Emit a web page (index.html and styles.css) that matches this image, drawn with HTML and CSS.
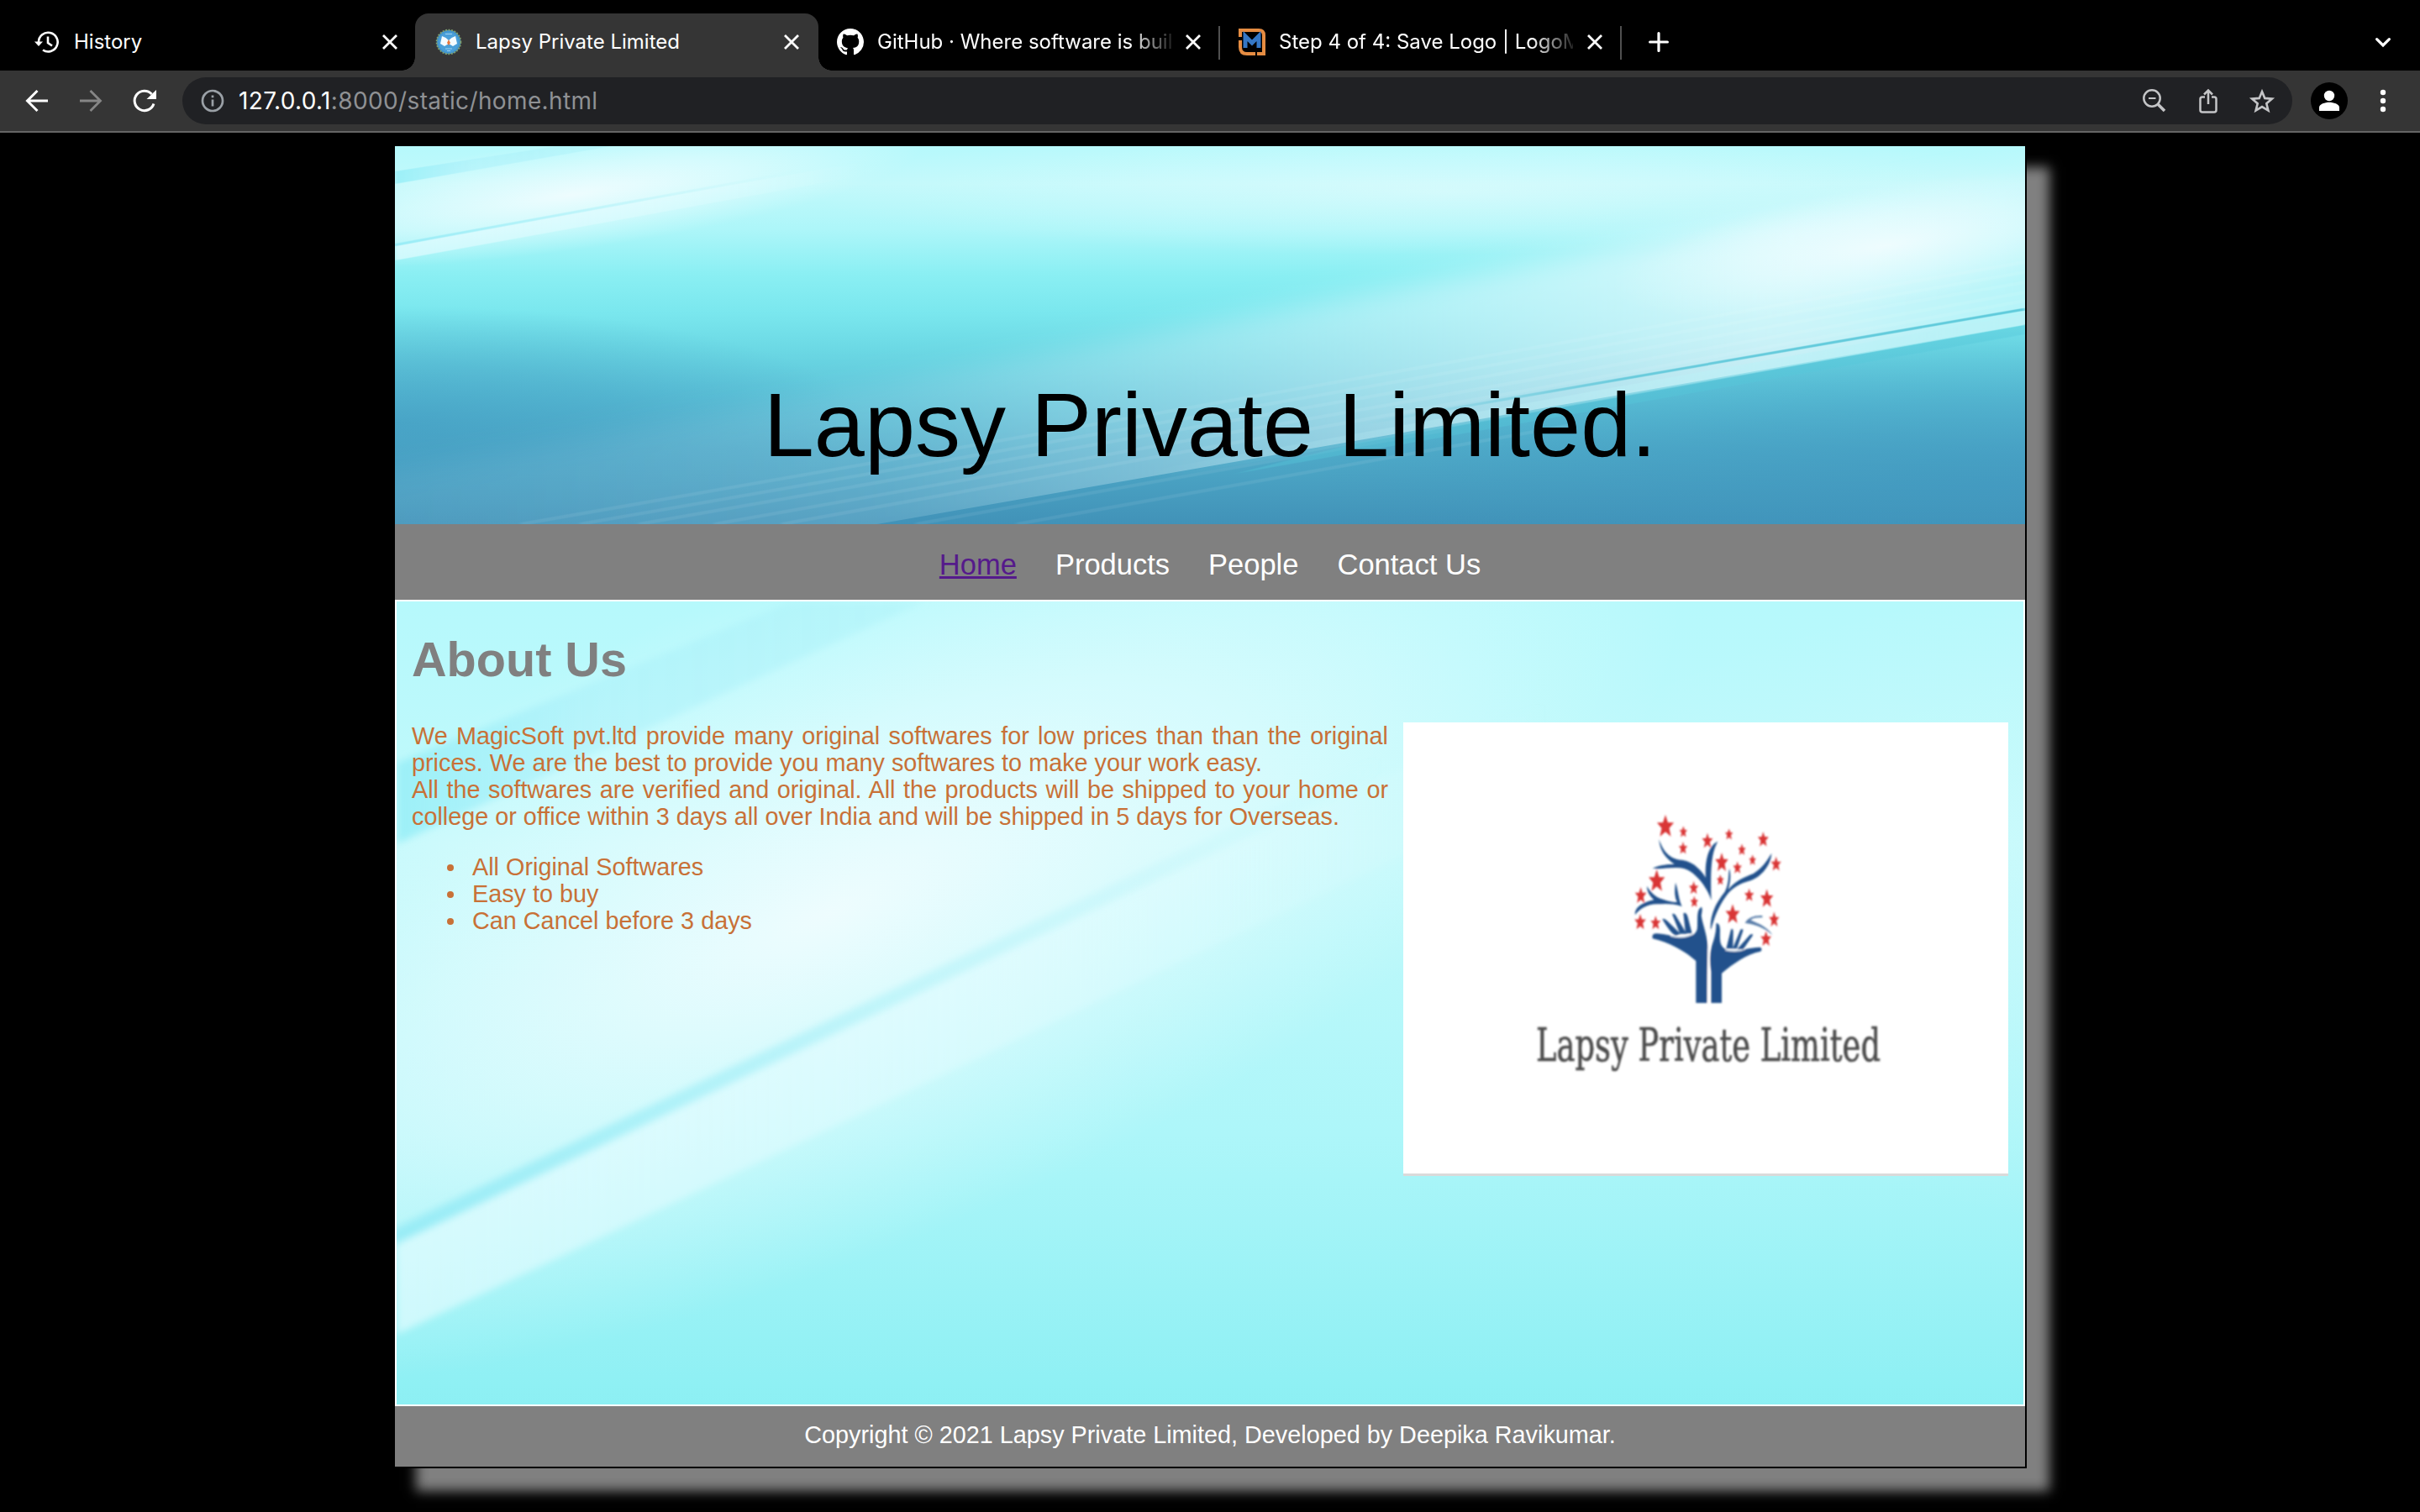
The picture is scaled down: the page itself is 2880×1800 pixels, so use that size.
FILE: index.html
```html
<!DOCTYPE html>
<html lang="en">
<head>
<meta charset="utf-8">
<title>Lapsy Private Limited</title>
<link rel="stylesheet" href="styles.css">
</head>
<body>
<svg class="defs" aria-hidden="true">
  <defs>
    <linearGradient id="base" x1="0" y1="0" x2="0" y2="1">
      <stop offset="0" stop-color="#b6f9fc"/><stop offset=".1" stop-color="#c2f9fb"/><stop offset=".22" stop-color="#adf6f9"/>
      <stop offset=".34" stop-color="#8aeff3"/><stop offset=".44" stop-color="#7ae7ee"/><stop offset=".54" stop-color="#6bd8e4"/>
      <stop offset=".66" stop-color="#5cc3d8"/><stop offset=".8" stop-color="#4fabc9"/><stop offset="1" stop-color="#4192b8"/>
    </linearGradient>
    <linearGradient id="beam" gradientUnits="userSpaceOnUse" x1="0" y1="0" x2="1940" y2="0">
      <stop offset="0" stop-color="#e0f8ff" stop-opacity=".08"/><stop offset=".3" stop-color="#e0f8ff" stop-opacity=".15"/>
      <stop offset=".6" stop-color="#ecfbff" stop-opacity=".46"/><stop offset=".85" stop-color="#f0fcff" stop-opacity=".72"/><stop offset="1" stop-color="#c8f8fc" stop-opacity=".75"/>
    </linearGradient>
    <linearGradient id="edge" gradientUnits="userSpaceOnUse" x1="0" y1="0" x2="560" y2="0">
      <stop offset="0" stop-color="#e2fcff" stop-opacity=".7"/><stop offset=".5" stop-color="#e2fcff" stop-opacity=".5"/><stop offset="1" stop-color="#e2fcff" stop-opacity="0"/>
    </linearGradient>
    <linearGradient id="lineA" gradientUnits="userSpaceOnUse" x1="0" y1="0" x2="480" y2="0">
      <stop offset="0" stop-color="#98ecf6"/><stop offset="1" stop-color="#b4f3f9" stop-opacity="0"/>
    </linearGradient>
    <linearGradient id="lineB" gradientUnits="userSpaceOnUse" x1="1150" y1="0" x2="1940" y2="0">
      <stop offset="0" stop-color="#69c7da" stop-opacity="0"/><stop offset=".4" stop-color="#69cbdc"/><stop offset="1" stop-color="#5fcbdb"/>
    </linearGradient>
    <linearGradient id="lineBand" gradientUnits="userSpaceOnUse" x1="900" y1="0" x2="1940" y2="0">
      <stop offset="0" stop-color="#bdeef5" stop-opacity="0"/><stop offset="1" stop-color="#baf2f7" stop-opacity=".9"/>
    </linearGradient>
    <linearGradient id="strip" gradientUnits="userSpaceOnUse" x1="0" y1="0" x2="260" y2="0">
      <stop offset="0" stop-color="#98eff7" stop-opacity=".9"/><stop offset=".35" stop-color="#a8effa" stop-opacity=".5"/><stop offset="1" stop-color="#b0f3f9" stop-opacity=".55"/>
    </linearGradient>
    <radialGradient id="glow"><stop offset="0" stop-color="#f6fdff" stop-opacity=".95"/><stop offset=".5" stop-color="#eefdff" stop-opacity=".55"/><stop offset="1" stop-color="#e8fdff" stop-opacity="0"/></radialGradient>
    <radialGradient id="shade"><stop offset="0" stop-color="#4098c0" stop-opacity=".6"/><stop offset=".5" stop-color="#4098c0" stop-opacity=".35"/><stop offset="1" stop-color="#4098c0" stop-opacity="0"/></radialGradient>
    <filter id="soft" x="-20%" y="-50%" width="140%" height="200%"><feGaussianBlur stdDeviation="30 16"/></filter>
    <filter id="fine" x="-20%" y="-50%" width="140%" height="200%"><feGaussianBlur stdDeviation="2 .7"/></filter>
    <clipPath id="beamClip"><path d="M0 0H1940V212L0 550Z"/></clipPath>
    <g id="waves">
      <rect width="1940" height="450" fill="url(#base)"/>
      <ellipse cx="0" cy="330" rx="560" ry="140" fill="url(#shade)"/>
      <ellipse cx="1900" cy="400" rx="800" ry="190" fill="url(#shade)"/>
      <ellipse cx="1250" cy="55" rx="760" ry="75" fill="url(#glow)" opacity=".4"/>
      <g clip-path="url(#beamClip)"><path d="M-60 400L1100 185L2000 20V230L1100 400L-60 570Z" fill="url(#beam)" filter="url(#soft)"/></g>
      <ellipse cx="1775" cy="118" rx="330" ry="72" fill="url(#glow)" transform="rotate(-9 1775 118)" opacity=".85"/>
      <path d="M900 386L1939 200V213L900 398Z" fill="url(#lineBand)" filter="url(#fine)"/>
      <path d="M1150 331L1940 194" stroke="url(#lineB)" stroke-width="3" filter="url(#fine)"/>
      <g stroke="#fff" stroke-opacity=".07" stroke-width="4" filter="url(#fine)">
        <path d="M150 450L1940 138M220 450L1940 150M290 450L1940 162M380 450L1940 174M460 450L1940 184M620 450L1250 338M740 450L1400 332"/>
      </g>
      <path d="M1150 352L1940 213V224L1000 390Z" fill="#57c8da" opacity=".4" filter="url(#fine)"/>
      <ellipse cx="210" cy="58" rx="420" ry="66" fill="url(#glow)" transform="rotate(-8 210 58)" opacity=".9"/>
      <path d="M0 30L192 0H257L0 45Z" fill="url(#strip)" filter="url(#fine)"/>
      <path d="M0 117L620 8L640 20L0 136Z" fill="url(#edge)" filter="url(#fine)"/>
      <path d="M-2 118L480 30" stroke="url(#lineA)" stroke-width="3" filter="url(#fine)"/>
    </g>
    <path id="star" d="M0-10L2.9-3.4 10-3.1 4.5 1.7 6.5 9 0 5 -6.5 9 -4.5 1.7 -10-3.1 -2.9-3.4Z"/>
    <path id="x" d="M4 4L20 20M20 4L4 20" fill="none" stroke="#fff" stroke-width="2.8"/>
  </defs>
</svg>

<div class="browser">
  <div class="tabs">
    <div class="tab">
      <svg class="fav" viewBox="0 0 32 32" fill="none" stroke="#fff" stroke-width="2.6"><path d="M6 16A11.3 11.3 0 1 1 11 25.500M17 9.500V17L22 20.500"/><path d="M1 15.500H11L6 21Z" fill="#fff" stroke="none"/></svg>
      <span class="tab-title">History</span>
      <svg class="close" viewBox="0 0 24 24"><use href="#x"/></svg>
    </div>
    <div class="tab active">
      <svg class="fav" viewBox="0 0 32 32"><circle cx="16" cy="16" r="14.3" fill="#3f94cf" stroke="#7d9d70" stroke-width="2" stroke-dasharray="2 1.5"/><circle cx="16" cy="16" r="12" fill="#4a9fd8"/><path d="M8 9L12.500 11 16 14 19.500 11 24 9 26 18 21 21 16 18 11 21 6 18Z" fill="#f4fbff"/><path d="M16 13L18 17 16 20 14 17Z" fill="#e8753a"/><path d="M12 6.500H20M12 24H20M14 26.500H18" stroke="#9fd2ee"/></svg>
      <span class="tab-title">Lapsy Private Limited</span>
      <svg class="close" viewBox="0 0 24 24"><use href="#x"/></svg>
    </div>
    <div class="tab divided">
      <svg class="fav" viewBox="0 0 16 16" fill="#fff"><path d="M8 0C3.58 0 0 3.58 0 8c0 3.54 2.29 6.53 5.47 7.59.4.07.55-.17.55-.38 0-.19-.01-.82-.01-1.49-2.01.37-2.53-.49-2.69-.94-.09-.23-.48-.94-.82-1.13-.28-.15-.68-.52-.01-.53.63-.01 1.08.58 1.23.82.72 1.21 1.87.87 2.33.66.07-.52.28-.87.51-1.07-1.78-.2-3.64-.89-3.64-3.95 0-.87.31-1.59.82-2.15-.08-.2-.36-1.02.08-2.12 0 0 .67-.21 2.2.82.64-.18 1.32-.27 2-.27s1.36.09 2 .27c1.53-1.04 2.2-.82 2.2-.82.44 1.1.16 1.92.08 2.12.51.56.82 1.27.82 2.15 0 3.07-1.87 3.75-3.65 3.95.29.25.54.73.54 1.48 0 1.07-.01 1.93-.01 2.2 0 .21.15.46.55.38A8.01 8.01 0 0 0 16 8c0-4.42-3.58-8-8-8z"/></svg>
      <span class="tab-title faded">GitHub · Where software is buil</span>
      <svg class="close" viewBox="0 0 24 24"><use href="#x"/></svg>
    </div>
    <div class="tab divided">
      <svg class="fav" viewBox="0 0 32 32"><path d="M2 10V2H24Q30 2 30 8V30H22M2 14V22Q2 30 10 30H20" fill="none" stroke="#e58c42" stroke-width="4"/><path d="M8 23V9L16 17 24 9V23" fill="none" stroke="#3577c5" stroke-width="5"/></svg>
      <span class="tab-title faded">Step 4 of 4: Save Logo | LogoM</span>
      <svg class="close" viewBox="0 0 24 24"><use href="#x"/></svg>
    </div>
    <svg class="plus" viewBox="0 0 24 24" fill="none" stroke="#fff" stroke-width="3.2" stroke-linecap="round"><path d="M12 1.600V22.400M1.600 12H22.400"/></svg>
    <svg class="chevron" viewBox="0 0 24 24" fill="none" stroke="#fff" stroke-width="3.2" stroke-linecap="round"><path d="M4.600 8.600L12 16 19.400 8.600"/></svg>
  </div>
  <div class="toolbar">
    <svg class="tool" viewBox="0 0 32 32" fill="none" stroke="#fff" stroke-width="3"><path d="M29 16H5M16.500 4L4.500 16 16.500 28"/></svg>
    <svg class="tool" viewBox="0 0 32 32" fill="none" stroke="#868686" stroke-width="2.8"><path d="M3 16H27M15.500 4L27.500 16 15.500 28"/></svg>
    <svg class="tool" viewBox="0 0 32 32" fill="none" stroke="#fff" stroke-width="3"><path d="M27 19.500A11.700 11.700 0 1 1 24.500 8"/><path d="M30 3V14H18.500Z" fill="#fff" stroke="none"/></svg>
    <div class="address">
      <svg class="info" viewBox="0 0 32 32" fill="none" stroke="#9aa0a6" stroke-width="2.7"><circle cx="16" cy="16" r="12"/><path d="M16 14.500V22.500M16 9.500V12.200"/></svg>
      <span class="url"><b>127.0.0.1</b>:8000/static/home.html</span>
      <div class="actions">
        <svg viewBox="0 0 32 32" fill="none" stroke="#c4c5c7" stroke-width="2.5"><circle cx="13" cy="13" r="9.7"/><path d="M9 13H17.500" stroke-width="2"/><path d="M20 20L28 28" stroke-width="3.6"/></svg>
        <svg viewBox="0 0 32 32" fill="none" stroke="#c4c5c7" stroke-width="2.5"><path d="M12 11.500H9Q6.500 11.500 6.500 14V27Q6.500 29.500 9 29.500H23Q25.500 29.500 25.500 27V14Q25.500 11.500 23 11.500H20M16 20V4M11 8.500L16 3.500 21 8.500"/></svg>
        <svg viewBox="0 0 32 32" fill="none" stroke="#c4c5c7" stroke-width="2.6"><path d="M16 5L19.300 12.900 27.900 13.600 21.300 19.200 23.400 27.600 16 23.100 8.600 27.600 10.700 19.200 4.100 13.600 12.700 12.900Z"/></svg>
      </div>
    </div>
    <svg class="avatar" viewBox="0 0 44 44"><circle cx="22" cy="22" r="22" fill="#000"/><circle cx="22" cy="16" r="6.200" fill="#fff"/><path d="M10 34V30C10 26 17 23.800 22 23.800S34 26 34 30V34Z" fill="#fff"/></svg>
    <svg class="dots" viewBox="0 0 32 32" fill="#fff"><circle cx="16" cy="6" r="3.200"/><circle cx="16" cy="16" r="3.200"/><circle cx="16" cy="26" r="3.200"/></svg>
  </div>
</div>

<div class="page">
  <header class="banner">
    <svg class="backdrop" viewBox="0 0 1940 450" preserveAspectRatio="none"><use href="#waves"/></svg>
    <div class="site-title">Lapsy Private Limited.</div>
  </header>
  <nav class="menu">
    <a class="current">Home</a><a>Products</a><a>People</a><a>Contact Us</a>
  </nav>
  <main class="content">
    <svg class="backdrop" viewBox="0 0 792 149" preserveAspectRatio="none"><use href="#waves"/></svg>
    <h1>About Us</h1>
    <div class="about">
      <div class="copy">
        <p>We MagicSoft pvt.ltd provide many original softwares for low prices than than the original prices. We are the best to provide you many softwares to make your work easy.</p>
        <p>All the softwares are verified and original. All the products will be shipped to your home or college or office within 3 days all over India and will be shipped in 5 days for Overseas.</p>
        <ul>
          <li>All Original Softwares</li>
          <li>Easy to buy</li>
          <li>Can Cancel before 3 days</li>
        </ul>
      </div>
      <svg class="logo" viewBox="0 0 720 540">
        <defs><filter id="logoSoft"><feGaussianBlur stdDeviation=".8"/></filter></defs>
        <g filter="url(#logoSoft)">
          <g transform="translate(230 80) scale(.33333)">
            <g fill="#20518c">
              <path d="M355 762V612C320 580 260 545 200 532Q196 514 212 514C245 514 268 526 300 526C335 526 360 520 360 490C362 460 356 430 374 419Q380 422 374 450C378 480 400 530 398 580Q395 610 395 762Z"/>
              <path d="M409 762V650Q400 600 411 560C424 525 428 500 427 478Q440 474 441 500C440 540 440 558 460 570C500 586 540 562 585 563Q594 570 585 578C535 588 490 620 447 656V762Z"/>
              <path d="M235 463Q240 457 254 470L300 515 283 521Q265 515 235 463ZM270 445Q278 438 288 458L322 515H298ZM310 442Q320 436 326 455L341 514H318ZM480 500Q488 492 488 510L487 568H463ZM514 500Q526 493 522 507L501 568H486ZM548 518Q562 512 557 522L524 570H502Z"/>
              <path d="M223 177C240 230 270 250 308 252C350 260 375 290 390 315C386 245 402 200 433 185C413 220 405 270 410 395C395 350 350 285 300 280C260 276 230 286 200 281C230 266 255 268 278 266C245 245 225 215 223 177Z"/>
              <path d="M408 505C403 445 430 400 458 365C474 335 470 305 474 282C483 310 475 340 470 358C495 325 530 312 560 300C600 275 612 245 625 228C622 270 590 310 550 325C510 335 480 355 462 381C435 420 420 455 408 505Z"/>
              <path d="M180 345C198 375 218 388 238 392C262 401 275 402 288 402C276 380 280 350 282 332C292 360 292 390 305 417C270 405 240 408 215 409C180 410 155 425 138 447C134 420 170 401 205 394C190 380 180 365 180 345Z"/>
              <path d="M530 476Q545 448 592 450V457Q560 455 550 466C580 480 610 490 628 520C600 492 560 480 530 476Z" opacity=".75"/>
            </g>
            <path d="M400 762V600Q398 550 410 500" fill="none" stroke="#fff" stroke-width="6"/>
            <path d="M265 523Q310 535 346 514M460 573Q500 583 530 570" fill="none" stroke="#dce5ef" stroke-width="4"/>
            <g fill="#d93434" stroke="#d93434" stroke-width="1.6">
              <use href="#star" transform="translate(246 131) scale(2.500 3.400)"/><use href="#star" transform="translate(310 151) scale(1.200 1.800)"/><use href="#star" transform="translate(309 209) scale(1.300 1.900)"/><use href="#star" transform="translate(396 183) scale(1.600 2.300)"/><use href="#star" transform="translate(473 160) scale(1.200 1.800)"/><use href="#star" transform="translate(595 178) scale(1.600 2.300)"/><use href="#star" transform="translate(519 215) scale(1.200 1.800)"/><use href="#star" transform="translate(447 260) scale(1.900 2.900)"/><use href="#star" transform="translate(503 279) scale(1.300 1.900)"/><use href="#star" transform="translate(557 252) scale(1.100 1.700)"/><use href="#star" transform="translate(641 266) scale(1.500 2.200)"/><use href="#star" transform="translate(442 323) scale(1.100 1.700)"/><use href="#star" transform="translate(215 326) scale(2.400 3.400)"/><use href="#star" transform="translate(158 378) scale(1.700 2.500)"/><use href="#star" transform="translate(347 351) scale(1.400 2)"/><use href="#star" transform="translate(349 401) scale(1.200 1.800)"/><use href="#star" transform="translate(545 377) scale(1.400 2)"/><use href="#star" transform="translate(608 389) scale(1.900 2.800)"/><use href="#star" transform="translate(486 445) scale(2.100 3)"/><use href="#star" transform="translate(634 464) scale(1.500 2.300)"/><use href="#star" transform="translate(156 473) scale(1.700 2.400)"/><use href="#star" transform="translate(211 476) scale(1.500 2.100)"/><use href="#star" transform="translate(605 533) scale(1.600 2.300)"/>
            </g>
          </g>
          <text class="logo-name" x="158" y="402.500" textLength="410" lengthAdjust="spacingAndGlyphs">Lapsy Private Limited</text>
        </g>
        <rect y="537" width="720" height="3" fill="#dadada"/>
      </svg>
    </div>
  </main>
  <footer class="footer">Copyright © 2021 Lapsy Private Limited, Developed by Deepika Ravikumar.</footer>
</div>
</body>
</html>
```
FILE: styles.css
```css
* { box-sizing: border-box; }
html, body { margin: 0; height: 1800px; overflow: hidden; background: #000; }
body { font-family: "Liberation Sans", Arial, sans-serif; }
.defs { position: absolute; width: 0; height: 0; }
svg { display: block; flex: none; }

.browser { font-family: Inter, Roboto, sans-serif; color: #fff; }
.tabs { display: flex; height: 84px; padding: 16px 32px 0 16px; background: #000; align-items: stretch; }
.tab { position: relative; display: flex; align-items: center; width: 478px; padding: 0 18px 0 24px; }
.tab.active { width: 480px; margin-right: -2px; padding-right: 20px; background: #353535; border-radius: 16px 16px 0 0; }
.tab.active::before, .tab.active::after { content: ""; position: absolute; bottom: 0; width: 16px; height: 16px; }
.tab.active::before { left: -16px; background: radial-gradient(circle at 0 0, transparent 15.5px, #353535 16px); }
.tab.active::after { right: -16px; background: radial-gradient(circle at 100% 0, transparent 15.5px, #353535 16px); }
.tab.divided::after { content: ""; position: absolute; right: -2px; top: 15px; width: 2px; height: 40px; background: #505050; }
.fav { width: 32px; height: 32px; margin-right: 16px; }
.tab-title { flex: 1; min-width: 0; margin-right: 14px; font-size: 24px; line-height: 32px; white-space: nowrap; }
.faded { -webkit-mask-image: linear-gradient(90deg, #000 300px, transparent 358px); mask-image: linear-gradient(90deg, #000 300px, transparent 358px); }
.close { width: 24px; height: 24px; }
.plus { width: 24px; height: 24px; margin: 22px 0 0 34px; }
.chevron { width: 24px; height: 24px; margin: 22px 0 0 auto; }
.toolbar { display: flex; align-items: center; height: 74px; padding: 0 28px; background: #353535; border-bottom: 2px solid #656565; }
.tool { width: 32px; height: 32px; margin-right: 32px; }
.address { display: flex; align-items: center; width: 2511px; height: 56px; margin-left: -3px; padding: 0 20px; border-radius: 28px; background: #202124; }
.info { width: 32px; height: 32px; margin-right: 15px; }
.url { font-size: 28px; line-height: 36px; color: #8f9194; letter-spacing: .37px; }
.url b { font-weight: 400; color: #fff; }
.actions { display: flex; gap: 32px; margin-left: auto; }
.actions svg { width: 32px; height: 32px; }
.avatar { width: 44px; height: 44px; margin-left: 22px; }
.dots { width: 32px; height: 32px; margin-left: 26px; }

.page { width: 1944px; margin: 14px auto 0; border: 2px solid #000; box-shadow: 27px 27px 13.5px #808080; }
.backdrop { position: absolute; inset: 0; width: 100%; height: 100%; }
.banner { position: relative; height: 450px; overflow: hidden; }
.site-title { position: relative; padding-top: 270px; font-size: 108px; line-height: 124px; text-align: center; color: #000; }
.menu { display: flex; justify-content: center; gap: 46px; height: 90px; padding-top: 28px; background: #808080; color: #fff; font-size: 34.5px; line-height: 40px; }
.current { color: #551a8b; text-decoration: underline; }
.content { position: relative; height: 960px; padding: 0 18px; border: 2px solid #fff; overflow: hidden; color: #c87137; font-size: 28.8px; line-height: 32px; }
h1 { position: relative; margin: 36px 0 42px; font-size: 57.6px; line-height: 66px; color: #808080; }
.about { position: relative; display: flex; justify-content: space-between; }
.copy { width: 1162px; }
p { margin: 0; text-align: justify; }
ul { margin: 28px 0 0; padding: 0; list-style: none; }
li { display: flex; align-items: center; padding-left: 42px; }
li::before { content: ""; width: 8px; height: 8px; margin: 2px 22px 0 0; border-radius: 50%; background: #c87137; }
.logo { width: 720px; height: 540px; background: #fff; }
.logo-name { font-family: "DejaVu Serif Condensed", "DejaVu Serif", serif; font-size: 55px; fill: #4c4c4c; stroke: #4c4c4c; stroke-width: .6; }
.footer { height: 72px; padding-top: 17px; background: #808080; color: #fff; font-size: 28.8px; line-height: 34px; text-align: center; }
```
